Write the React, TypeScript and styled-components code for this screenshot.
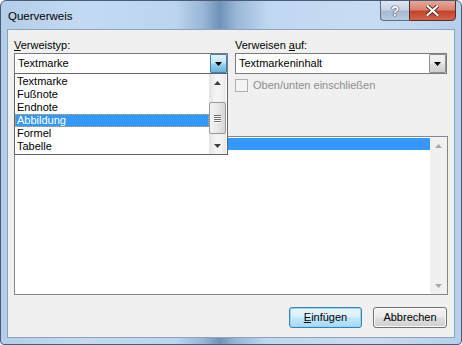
import styled, { createGlobalStyle } from 'styled-components';

const GlobalStyle = createGlobalStyle`
  html, body {
    margin: 0;
    padding: 0;
    width: 462px;
    height: 345px;
    overflow: hidden;
    background: #ffffff;
  }
  * {
    box-sizing: border-box;
  }
`;

const font = `"Liberation Sans", Arial, sans-serif`;

const typeItems = ['Textmarke', 'Fußnote', 'Endnote', 'Abbildung', 'Formel', 'Tabelle'];

const Arrow = ({ up, color = '#000' }: { up?: boolean; color?: string }) => (
  <svg width="7" height="4" viewBox="0 0 7 4">
    {up ? <path d="M0 4 L3.5 0 L7 4 Z" fill={color} /> : <path d="M0 0 L7 0 L3.5 4 Z" fill={color} />}
  </svg>
);

export default function App() {
  return (
    <>
      <GlobalStyle />
      <Window>
        <TitleBar>
          <Title>Querverweis</Title>
          <CaptionButtons>
            <HelpButton>?</HelpButton>
            <CloseButton>
              <svg width="13" height="11" viewBox="0 0 13 11">
                <path
                  d="M1.5 1 L11.5 10 M11.5 1 L1.5 10"
                  stroke="#5a2a22"
                  strokeWidth="4"
                  strokeLinecap="round"
                />
                <path
                  d="M1.5 1 L11.5 10 M11.5 1 L1.5 10"
                  stroke="#ffffff"
                  strokeWidth="2.2"
                  strokeLinecap="round"
                />
              </svg>
            </CloseButton>
          </CaptionButtons>
        </TitleBar>
        <Client>
          <TopRow>
            <Field $width={214}>
              <Label>
                <u>V</u>erweistyp:
              </Label>
              <ComboWrap>
                <Combo>
                  <ComboText>Textmarke</ComboText>
                  <DropButton $active>
                    <Arrow />
                  </DropButton>
                </Combo>
                <DropList>
                  <DropItems>
                    {typeItems.map((item) => (
                      <DropItem key={item} $selected={item === 'Abbildung'}>
                        {item}
                      </DropItem>
                    ))}
                  </DropItems>
                  <ScrollBar>
                    <ScrollArrow>
                      <Arrow up color="#404040" />
                    </ScrollArrow>
                    <Track>
                      <Thumb>
                        <Grip />
                        <Grip />
                        <Grip />
                        <Grip />
                      </Thumb>
                    </Track>
                    <ScrollArrow>
                      <Arrow color="#404040" />
                    </ScrollArrow>
                  </ScrollBar>
                </DropList>
              </ComboWrap>
            </Field>
            <Field $width={212}>
              <Label>
                Verweisen <u>a</u>uf:
              </Label>
              <Combo>
                <ComboText>Textmarkeninhalt</ComboText>
                <DropButton>
                  <Arrow />
                </DropButton>
              </Combo>
              <CheckRow>
                <CheckBox />
                <CheckLabel>Oben/unten einschließen</CheckLabel>
              </CheckRow>
            </Field>
          </TopRow>
          <ListBox>
            <ListItems>
              <ListItem $selected />
            </ListItems>
            <ListScroll>
              <ScrollArrow>
                <Arrow up color="#a8a8a8" />
              </ScrollArrow>
              <ListTrack />
              <ScrollArrow>
                <Arrow color="#a8a8a8" />
              </ScrollArrow>
            </ListScroll>
          </ListBox>
          <ButtonRow>
            <DialogButton $default $width={73}>
              <u>E</u>infügen
            </DialogButton>
            <DialogButton $width={74}>Abbrechen</DialogButton>
          </ButtonRow>
        </Client>
      </Window>
    </>
  );
}

const Window = styled.div`
  width: 462px;
  height: 345px;
  display: flex;
  flex-direction: column;
  border: 1px solid #4a5d78;
  border-radius: 6px 6px 4px 4px;
  overflow: hidden;
  font-family: ${font};
  background: linear-gradient(
    to right,
    #b4cde8 0%,
    #c3daf2 18%,
    #bcd4ee 38%,
    #98b6d6 44%,
    #6f92b8 47.5%,
    #98b6d6 51%,
    #c0d7f0 58%,
    #c8ddf3 80%,
    #b6cfea 100%
  );
`;

const TitleBar = styled.div`
  height: 28px;
  display: flex;
  justify-content: space-between;
  align-items: flex-start;
  padding-left: 7px;
  padding-right: 5px;
`;

const Title = styled.div`
  margin-top: 8px;
  font-size: 11.5px;
  line-height: 14px;
  color: #000;
`;

const CaptionButtons = styled.div`
  display: flex;
  margin-top: -1px;
`;

const HelpButton = styled.div`
  width: 29px;
  height: 21px;
  border: 1px solid #5d6f86;
  border-right: none;
  border-radius: 0 0 0 4px;
  background: linear-gradient(to bottom, #dfe8f2 0%, #c6d4e4 45%, #a9bbd2 55%, #b8cadf 100%);
  display: flex;
  align-items: center;
  justify-content: center;
  font-family: ${font};
  font-weight: bold;
  font-size: 14px;
  color: #ffffff;
  text-shadow: 0 0 1px #2c3e56, 0 0 1px #2c3e56, 0 0 1px #2c3e56;
`;

const CloseButton = styled.div`
  width: 47px;
  height: 21px;
  border: 1px solid #5a2a24;
  border-radius: 0 0 4px 0;
  background: linear-gradient(to bottom, #e8a798 0%, #d98474 45%, #c4432c 55%, #d0644a 100%);
  display: flex;
  align-items: center;
  justify-content: center;
`;

const Client = styled.div`
  flex: 1;
  margin: 0 6px 6px;
  border: 1px solid #8da2bd;
  background: #f0f0f0;
  padding: 9px 6px 9px;
  display: flex;
  flex-direction: column;
  font-size: 11px;
  color: #000;
`;

const TopRow = styled.div`
  display: flex;
  gap: 7px;
`;

const Field = styled.div<{ $width: number }>`
  width: ${(p) => p.$width}px;
  display: flex;
  flex-direction: column;
`;

const Label = styled.div`
  height: 13px;
  line-height: 13px;
  margin-bottom: 1px;
  white-space: nowrap;
`;

const ComboWrap = styled.div`
  position: relative;
`;

const Combo = styled.div`
  height: 21px;
  border: 1px solid #7a7a7a;
  background: #ffffff;
  display: flex;
  align-items: stretch;
`;

const ComboText = styled.div`
  flex: 1;
  padding-left: 3px;
  line-height: 19px;
  white-space: nowrap;
`;

const DropButton = styled.div<{ $active?: boolean }>`
  width: 17px;
  border: 1px solid ${(p) => (p.$active ? '#3c7fb1' : '#8e8f8f')};
  border-radius: 1px;
  background: ${(p) =>
    p.$active
      ? 'linear-gradient(to bottom, #e3f3fc 0%, #c4e5f6 45%, #98d1ef 55%, #68b3db 100%)'
      : 'linear-gradient(to bottom, #f2f2f2 0%, #ebebeb 45%, #dddddd 55%, #cfcfcf 100%)'};
  display: flex;
  align-items: center;
  justify-content: center;
`;

const DropList = styled.div`
  position: absolute;
  top: 20px;
  left: 0;
  width: 214px;
  border: 1px solid #646464;
  background: #ffffff;
  display: flex;
  z-index: 10;
`;

const DropItems = styled.div`
  flex: 1;
  padding-top: 1px;
  padding-bottom: 1px;
`;

const DropItem = styled.div<{ $selected?: boolean }>`
  height: 13px;
  line-height: 13px;
  padding-left: 2px;
  white-space: nowrap;
  background: ${(p) => (p.$selected ? '#3399ff' : 'transparent')};
  color: ${(p) => (p.$selected ? '#ffffff' : '#000000')};
  outline: ${(p) => (p.$selected ? '1px dotted #e8a050' : 'none')};
  outline-offset: -1px;
`;

const ScrollBar = styled.div`
  width: 17px;
  margin-right: 1px;
  display: flex;
  flex-direction: column;
  background: linear-gradient(to right, #e4e4e4, #f4f4f4 40%, #f4f4f4 70%, #e8e8e8);
`;

const ScrollArrow = styled.div`
  height: 17px;
  display: flex;
  align-items: center;
  justify-content: center;
`;

const Track = styled.div`
  flex: 1;
  padding-top: 11px;
  display: flex;
  flex-direction: column;
`;

const Thumb = styled.div`
  height: 32px;
  border: 1px solid #979797;
  border-radius: 2px;
  background: linear-gradient(to right, #f3f3f3 0%, #e8e8e8 50%, #d6d6d6 100%);
  display: flex;
  flex-direction: column;
  align-items: center;
  justify-content: center;
  gap: 1px;
`;

const Grip = styled.div`
  width: 7px;
  height: 1px;
  background: #6a6a6a;
  box-shadow: 0 1px 0 #ffffff;
`;

const CheckRow = styled.div`
  display: flex;
  align-items: center;
  gap: 5px;
  margin-top: 4px;
  height: 14px;
`;

const CheckBox = styled.div`
  width: 13px;
  height: 13px;
  border: 1px solid #b1b1b1;
  background: #f4f4f4;
`;

const CheckLabel = styled.div`
  color: #8d8d8d;
  white-space: nowrap;
`;

const ListBox = styled.div`
  margin-top: 44px;
  height: 159px;
  border: 1px solid #828790;
  background: #ffffff;
  display: flex;
`;

const ListItems = styled.div`
  flex: 1;
  padding-top: 1px;
`;

const ListItem = styled.div<{ $selected?: boolean }>`
  height: 12px;
  background: ${(p) => (p.$selected ? '#3399ff' : 'transparent')};
`;

const ListScroll = styled.div`
  width: 17px;
  display: flex;
  flex-direction: column;
  background: #f0f0f0;
`;

const ListTrack = styled.div`
  flex: 1;
`;

const ButtonRow = styled.div`
  display: flex;
  justify-content: flex-end;
  gap: 11px;
  margin-top: 12px;
  padding-right: 1px;
`;

const DialogButton = styled.div<{ $default?: boolean; $width: number }>`
  width: ${(p) => p.$width}px;
  height: 21px;
  border: 1px solid ${(p) => (p.$default ? '#3c7fb1' : '#707070')};
  border-radius: 3px;
  background: ${(p) =>
    p.$default
      ? 'linear-gradient(to bottom, #eaf6fd 0%, #d9f0fc 45%, #bee6fd 55%, #a7d9f5 100%)'
      : 'linear-gradient(to bottom, #f2f2f2 0%, #ebebeb 45%, #dddddd 55%, #cfcfcf 100%)'};
  box-shadow: ${(p) => (p.$default ? 'inset 0 0 0 1px #8fd8f8' : 'inset 0 0 0 1px #fcfcfc')};
  display: flex;
  align-items: center;
  justify-content: center;
  line-height: 19px;
  white-space: nowrap;
`;
